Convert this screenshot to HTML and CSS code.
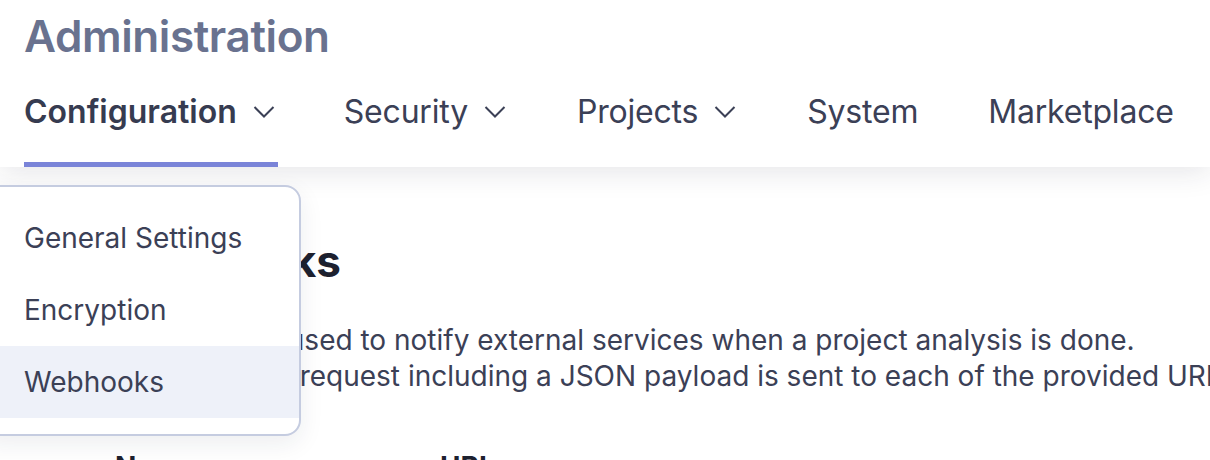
FILE: index.html
```html
<!DOCTYPE html>
<html lang="en">
<head>
<meta charset="utf-8">
<title>Administration</title>
<link rel="stylesheet" href="styles.css">
</head>
<body>
<header class="top">
  <h1 class="page-title">Administration</h1>
  <nav class="tabs">
    <a class="tab active" href="#">Configuration<svg class="chev" viewBox="0 0 24 24" width="24" height="24"><path d="M2.5 7 L12 16.5 L21.5 7" fill="none" stroke="currentColor" stroke-width="2"/></svg></a>
    <a class="tab" href="#">Security<svg class="chev" viewBox="0 0 24 24" width="24" height="24"><path d="M2.5 7 L12 16.5 L21.5 7" fill="none" stroke="currentColor" stroke-width="2"/></svg></a>
    <a class="tab" href="#">Projects<svg class="chev" viewBox="0 0 24 24" width="24" height="24"><path d="M2.5 7 L12 16.5 L21.5 7" fill="none" stroke="currentColor" stroke-width="2"/></svg></a>
    <a class="tab" href="#">System</a>
    <a class="tab" href="#">Marketplace</a>
  </nav>
</header>
<main class="content">
  <h2 class="section-title">Webhooks</h2>
  <p class="desc">Webhooks are used to notify external services when a project analysis is done.<br>An HTTP POST request including a JSON payload is sent to each of the provided URLs.</p>
  <div class="table-head">
    <span class="col-name">Name</span>
    <span class="col-url">URL</span>
  </div>
</main>
<div class="dropdown">
  <a class="menu-item" href="#">General Settings</a>
  <a class="menu-item" href="#">Encryption</a>
  <a class="menu-item selected" href="#">Webhooks</a>
</div>
</body>
</html>
```
FILE: styles.css
```css
* { box-sizing: border-box; }
html, body { margin: 0; padding: 0; }
body {
  font-family: Inter, "Noto Sans", sans-serif;
  background: #ffffff;
  color: #3b4056;
  width: 1210px;
  height: 460px;
  overflow: hidden;
  position: relative;
}
a { text-decoration: none; color: inherit; }

.top {
  background: #ffffff;
  padding: 8px 0 0 24px;
  box-shadow: 0 4px 28px rgba(30, 35, 60, 0.12);
  position: relative;
  z-index: 1;
}
.page-title {
  margin: 0;
  font-size: 44px;
  line-height: 56px;
  font-weight: 600;
  letter-spacing: -0.4px;
  color: #69728f;
}
.tabs {
  display: flex;
  gap: 70px;
  margin-top: 28px;
}
.tab {
  display: flex;
  align-items: center;
  font-size: 32px;
  line-height: 40px;
  letter-spacing: -0.2px;
  padding-bottom: 30px;
  border-bottom: 5px solid transparent;
  color: #3b4056;
}
.tab.active {
  font-weight: 600;
  letter-spacing: 0;
  color: #363b50;
  border-bottom-color: #7a84d8;
  padding-right: 2px;
  margin-right: -4px;
}
.chev {
  margin-left: 15px;
  color: #3b4056;
}

.content {
  padding: 66px 0 0 90px;
  color: #3b4056;
}
.section-title {
  margin: 0 0 0 22px;
  font-size: 44px;
  line-height: 56px;
  font-weight: 700;
  color: #1d212f;
}
.desc {
  margin: 33px 0 0;
  font-size: 28px;
  line-height: 36px;
  white-space: nowrap;
}
.table-head {
  display: flex;
  margin-top: 56px;
  padding-left: 25px;
  font-size: 28px;
  font-weight: 700;
  color: #1d212f;
}
.col-name { width: 325px; }

.dropdown {
  position: absolute;
  top: 185px;
  left: -20px;
  width: 321px;
  padding: 15px 0 16px;
  background: #ffffff;
  border: 2px solid #c5cce0;
  border-radius: 16px;
  box-shadow: 0 8px 24px rgba(30, 35, 60, 0.08);
  z-index: 2;
  display: flex;
  flex-direction: column;
}
.menu-item {
  display: block;
  font-size: 28px;
  line-height: 72px;
  padding-left: 42px;
  color: #3b4056;
}
.menu-item.selected {
  background: #eef1f9;
}
```
